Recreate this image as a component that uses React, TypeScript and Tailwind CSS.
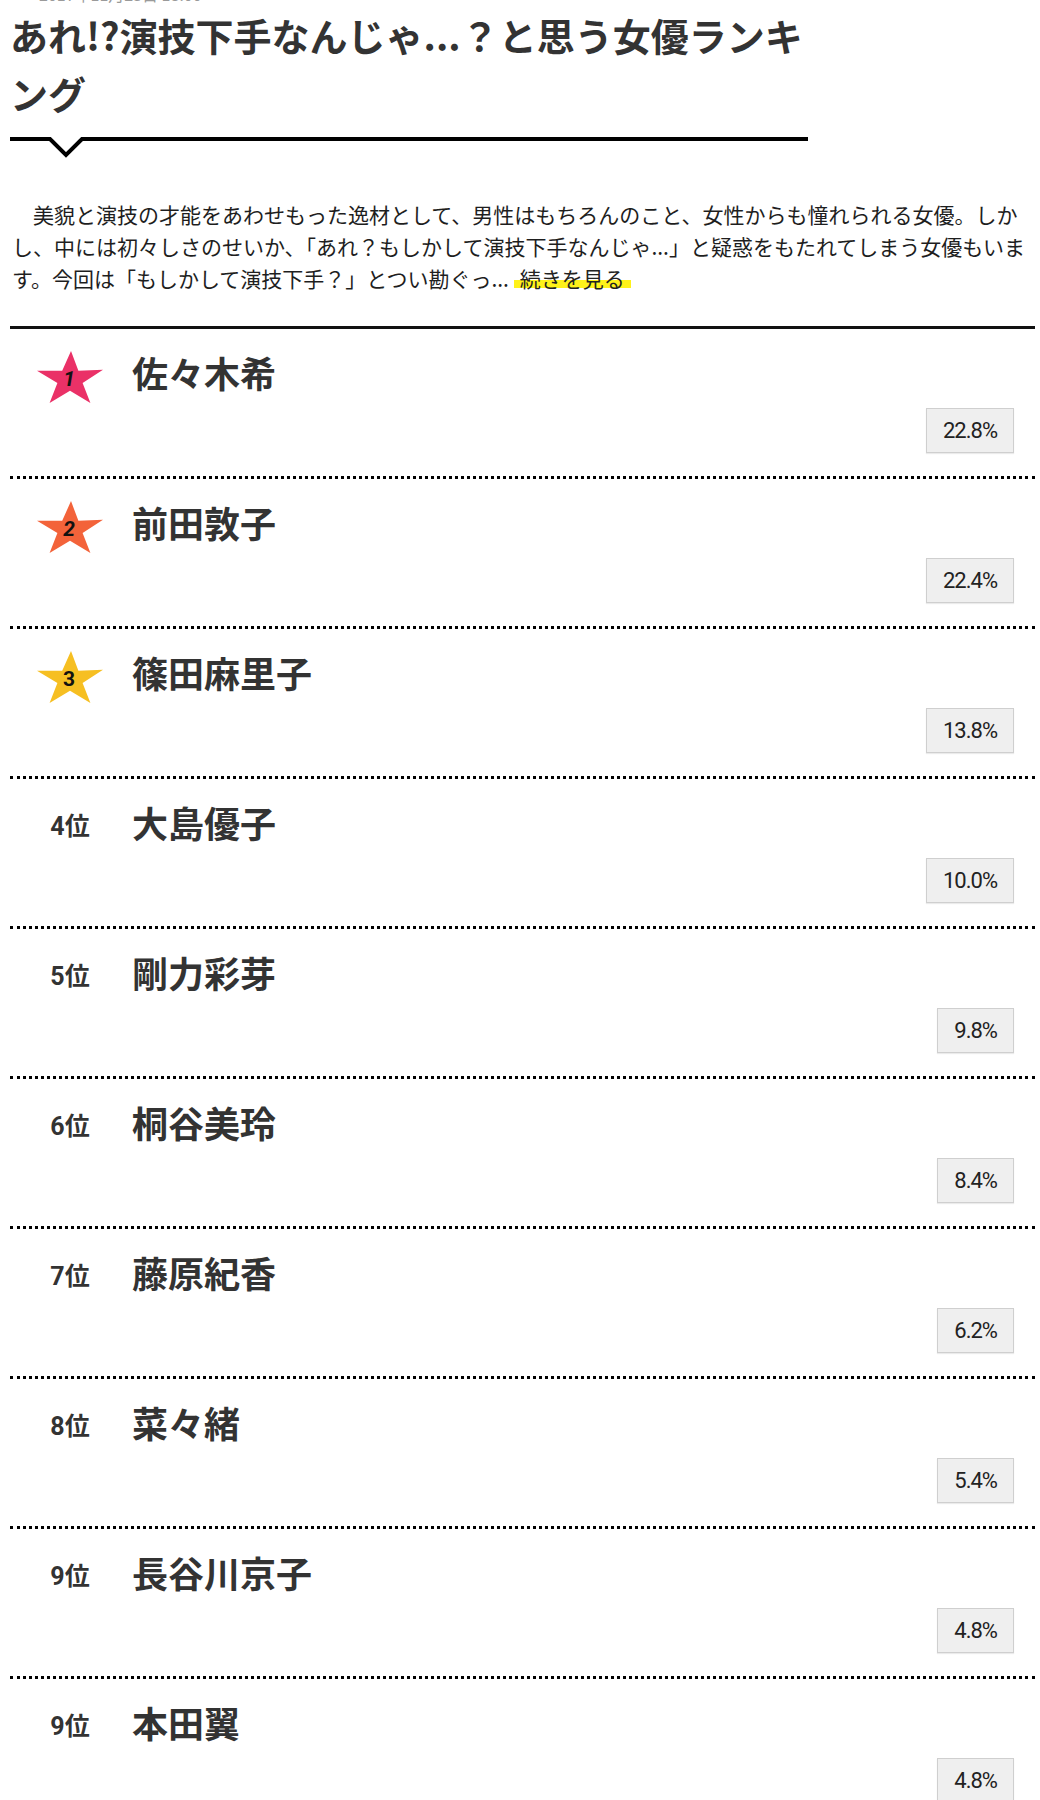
import { Clock } from "lucide-react";

type Entry = { rank: number; name: string; rate: string };

const entries: Entry[] = [
  { rank: 1, name: "佐々木希", rate: "22.8%" },
  { rank: 2, name: "前田敦子", rate: "22.4%" },
  { rank: 3, name: "篠田麻里子", rate: "13.8%" },
  { rank: 4, name: "大島優子", rate: "10.0%" },
  { rank: 5, name: "剛力彩芽", rate: "9.8%" },
  { rank: 6, name: "桐谷美玲", rate: "8.4%" },
  { rank: 7, name: "藤原紀香", rate: "6.2%" },
  { rank: 8, name: "菜々緒", rate: "5.4%" },
  { rank: 9, name: "長谷川京子", rate: "4.8%" },
  { rank: 9, name: "本田翼", rate: "4.8%" },
];

// top three get a coloured star instead of "n位"
const starColors: Record<number, string> = {
  1: "#ea3167",
  2: "#f3633a",
  3: "#f6bf22",
};

function RankStar({ rank }: { rank: number }) {
  return (
    <svg width="66" height="52" viewBox="0 0 66 52">
      <polygon
        points="34,0 41.4,19.8 66,18.8 45.6,32.1 53.4,51.9 33,39.7 12.6,51.9 20.4,32.1 0,19.8 25.2,19.8"
        fill={starColors[rank]}
      />
      <text
        x="32"
        y="35"
        textAnchor="middle"
        fontSize="21"
        fontWeight="700"
        fontStyle={rank === 3 ? "normal" : "italic"}
        fill="#111"
        fontFamily="Roboto, sans-serif"
      >
        {rank}
      </text>
    </svg>
  );
}

function RankRow({ entry }: { entry: Entry }) {
  return (
    <li className="border-b-[3px] border-dotted border-black pt-[22px] pb-[23px]">
      <div className="flex h-[52px] items-center">
        <div className="flex w-[120px] justify-center">
          {entry.rank <= 3 ? (
            <RankStar rank={entry.rank} />
          ) : (
            <span className="font-['Roboto','Noto_Sans_CJK_JP',sans-serif] text-[25px] font-bold text-[#333]">
              {entry.rank}位
            </span>
          )}
        </div>
        <span className="mb-[10px] ml-[2px] text-[36px] font-bold leading-none text-[#333]">
          {entry.name}
        </span>
      </div>
      <div className="mt-[5px] flex justify-end pr-[21px]">
        <span className="flex h-[45px] items-center border border-[#cfcfcf] bg-[#efefef] px-[16px] font-['Roboto',sans-serif] text-[22px] tracking-[-1px] text-[#222] shadow-[0_1px_1px_rgba(0,0,0,0.08)]">
          {entry.rate}
        </span>
      </div>
    </li>
  );
}

export default function App() {
  return (
    <div className="w-[1040px] bg-white font-['Noto_Sans_CJK_JP',sans-serif] text-[#222]">
      {/* date line, mostly scrolled off the top */}
      <div className="flex h-[4px] items-end overflow-hidden pl-[12px] text-[#9a9a9a]">
        <div className="flex items-center gap-[16px] text-[16px] leading-[20px]">
          <Clock size={11} strokeWidth={3} />
          <span>2017年11月23日 18:00</span>
        </div>
      </div>

      <h1 className="ml-[10px] mt-[2px] w-[798px] text-[38px] font-bold leading-[58px] text-[#333]">
        あれ!?演技下手なんじゃ...？と思う女優ランキング
      </h1>

      <svg className="ml-[10px] mt-[15px] block" width="798" height="22" viewBox="0 0 798 22">
        <path d="M0 2 H40 L56 18 L72 2 H798" fill="none" stroke="#000" strokeWidth="4" />
      </svg>

      <p className="mt-[39px] pl-[12px] text-[21px] leading-[32px] text-[#1e1e1e]">
        {"\u3000"}美貌と演技の才能をあわせもった逸材として、男性はもちろんのこと、女性からも憧れられる女優。しかし、中には初々しさのせいか、「あれ？もしかして演技下手なんじゃ...」と疑惑をもたれてしまう女優もいます。今回は「もしかして演技下手？」とつい勘ぐっ...{" "}
        <a className="bg-[linear-gradient(transparent_56%,#fff21a_56%,#fff21a_83%,transparent_83%)] px-[6px] text-[#222]">
          続きを見る
        </a>
      </p>

      <div className="ml-[10px] mr-[5px] mt-[32px] border-t-[3px] border-[#111]">
        <ul>
          {entries.map((entry, i) => (
            <RankRow key={i} entry={entry} />
          ))}
        </ul>
      </div>
    </div>
  );
}
